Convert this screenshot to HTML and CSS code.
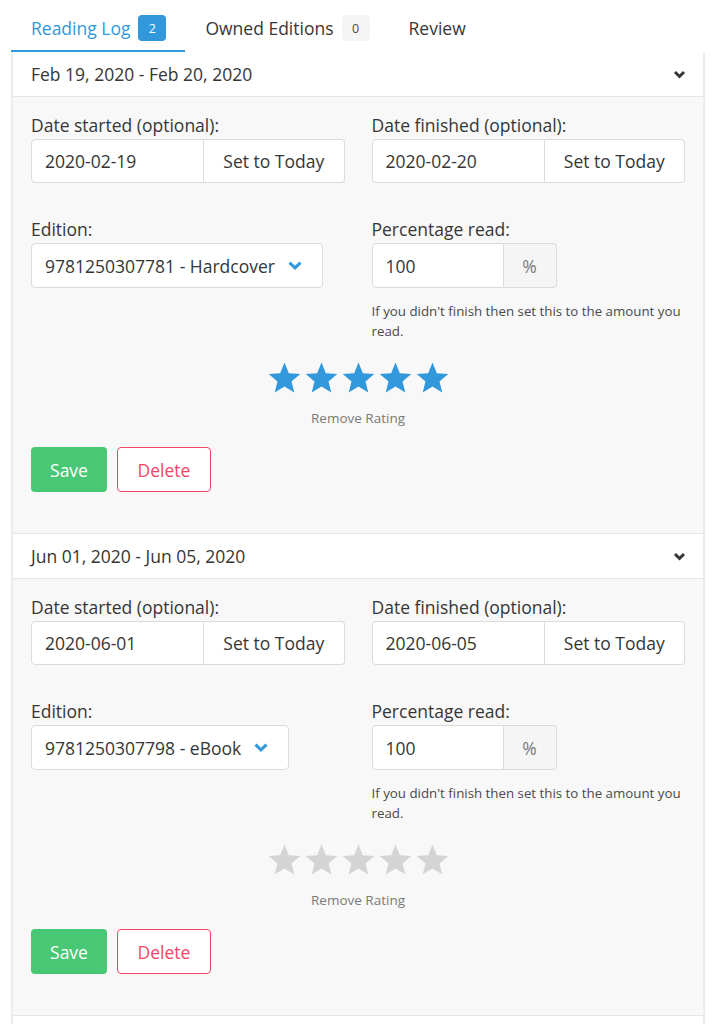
FILE: index.html
```html
<!DOCTYPE html>
<html lang="en">

<head>
    <meta charset="UTF-8">
    <meta name="viewport" content="width=device-width, initial-scale=1.0">
    <title>Reading Log</title>
    <link rel="stylesheet" href="styles.css">
</head>

<body>
    <div class="tabs">
        <ul>
            <li class="is_active"><a href="JavaScript:">Reading Log <span class="tag tag_info">2</span></a></li>
            <li><a href="JavaScript:">Owned Editions <span class="tag">0</span></a></li>
            <li><a href="JavaScript:">Review</a></li>
        </ul>
    </div>

    <div class="log">
        <div class="log_head">
            <span>Feb 19, 2020 - Feb 20, 2020</span>
            <svg class="head_arrow" width="13" height="9" viewBox="0 0 13 9"><path d="M2 2l4.5 4.5L11 2" fill="none" stroke="#363636" stroke-width="3"/></svg>
        </div>
        <div class="log_body">
            <div class="cols">
                <div class="field">
                    <label>Date started (optional):</label>
                    <div class="addons">
                        <input type="text" value="2020-02-19">
                        <button type="button">Set to Today</button>
                    </div>
                </div>
                <div class="field">
                    <label>Date finished (optional):</label>
                    <div class="addons">
                        <input type="text" value="2020-02-20">
                        <button type="button">Set to Today</button>
                    </div>
                </div>
                <div class="field">
                    <label>Edition:</label>
                    <div class="select">
                        <span>9781250307781 - Hardcover</span>
                        <svg width="14" height="9" viewBox="0 0 14 9"><path d="M1.5 1.6l5.5 5.3 5.5-5.3" fill="none" stroke="#3298dc" stroke-width="3"/></svg>
                    </div>
                </div>
                <div class="field">
                    <label>Percentage read:</label>
                    <div class="addons addons_pct">
                        <input type="text" value="100">
                        <span class="unit">%</span>
                    </div>
                    <p class="help">If you didn't finish then set this to the amount you read.</p>
                </div>
            </div>
            <div class="rating">
                <div class="stars">
                    <svg viewBox="0 0 32 32"><path d="M16 1.5l4.2 10.3 11.1.8-8.5 7.2 2.7 10.8L16 24.7l-9.5 5.9 2.7-10.8L.7 12.6l11.1-.8z"/></svg>
                    <svg viewBox="0 0 32 32"><path d="M16 1.5l4.2 10.3 11.1.8-8.5 7.2 2.7 10.8L16 24.7l-9.5 5.9 2.7-10.8L.7 12.6l11.1-.8z"/></svg>
                    <svg viewBox="0 0 32 32"><path d="M16 1.5l4.2 10.3 11.1.8-8.5 7.2 2.7 10.8L16 24.7l-9.5 5.9 2.7-10.8L.7 12.6l11.1-.8z"/></svg>
                    <svg viewBox="0 0 32 32"><path d="M16 1.5l4.2 10.3 11.1.8-8.5 7.2 2.7 10.8L16 24.7l-9.5 5.9 2.7-10.8L.7 12.6l11.1-.8z"/></svg>
                    <svg viewBox="0 0 32 32"><path d="M16 1.5l4.2 10.3 11.1.8-8.5 7.2 2.7 10.8L16 24.7l-9.5 5.9 2.7-10.8L.7 12.6l11.1-.8z"/></svg>
                </div>
                <a href="JavaScript:" class="remove">Remove Rating</a>
            </div>
            <div class="actions">
                <button type="button" class="btn_save">Save</button>
                <button type="button" class="btn_delete">Delete</button>
            </div>
        </div>

        <div class="log_head">
            <span>Jun 01, 2020 - Jun 05, 2020</span>
            <svg class="head_arrow" width="13" height="9" viewBox="0 0 13 9"><path d="M2 2l4.5 4.5L11 2" fill="none" stroke="#363636" stroke-width="3"/></svg>
        </div>
        <div class="log_body">
            <div class="cols">
                <div class="field">
                    <label>Date started (optional):</label>
                    <div class="addons">
                        <input type="text" value="2020-06-01">
                        <button type="button">Set to Today</button>
                    </div>
                </div>
                <div class="field">
                    <label>Date finished (optional):</label>
                    <div class="addons">
                        <input type="text" value="2020-06-05">
                        <button type="button">Set to Today</button>
                    </div>
                </div>
                <div class="field">
                    <label>Edition:</label>
                    <div class="select">
                        <span>9781250307798 - eBook</span>
                        <svg width="14" height="9" viewBox="0 0 14 9"><path d="M1.5 1.6l5.5 5.3 5.5-5.3" fill="none" stroke="#3298dc" stroke-width="3"/></svg>
                    </div>
                </div>
                <div class="field">
                    <label>Percentage read:</label>
                    <div class="addons addons_pct">
                        <input type="text" value="100">
                        <span class="unit">%</span>
                    </div>
                    <p class="help">If you didn't finish then set this to the amount you read.</p>
                </div>
            </div>
            <div class="rating">
                <div class="stars stars_empty">
                    <svg viewBox="0 0 32 32"><path d="M16 1.5l4.2 10.3 11.1.8-8.5 7.2 2.7 10.8L16 24.7l-9.5 5.9 2.7-10.8L.7 12.6l11.1-.8z"/></svg>
                    <svg viewBox="0 0 32 32"><path d="M16 1.5l4.2 10.3 11.1.8-8.5 7.2 2.7 10.8L16 24.7l-9.5 5.9 2.7-10.8L.7 12.6l11.1-.8z"/></svg>
                    <svg viewBox="0 0 32 32"><path d="M16 1.5l4.2 10.3 11.1.8-8.5 7.2 2.7 10.8L16 24.7l-9.5 5.9 2.7-10.8L.7 12.6l11.1-.8z"/></svg>
                    <svg viewBox="0 0 32 32"><path d="M16 1.5l4.2 10.3 11.1.8-8.5 7.2 2.7 10.8L16 24.7l-9.5 5.9 2.7-10.8L.7 12.6l11.1-.8z"/></svg>
                    <svg viewBox="0 0 32 32"><path d="M16 1.5l4.2 10.3 11.1.8-8.5 7.2 2.7 10.8L16 24.7l-9.5 5.9 2.7-10.8L.7 12.6l11.1-.8z"/></svg>
                </div>
                <a href="JavaScript:" class="remove">Remove Rating</a>
            </div>
            <div class="actions">
                <button type="button" class="btn_save">Save</button>
                <button type="button" class="btn_delete">Delete</button>
            </div>
        </div>

        <div class="log_head"></div>
    </div>
</body>

</html>
```

FILE: styles.css
```css
* {
    margin: 0;
    padding: 0;
    box-sizing: border-box;
}

body {
    font-family: "Open Sans", "Noto Sans", sans-serif;
    font-size: 17.5px;
    color: #363636;
    background-color: #fff;
}

a {
    text-decoration: none;
    color: #363636;
}

ul {
    list-style: none;
}

input,
button {
    font-family: inherit;
    color: #363636;
}

/* tabs */
.tabs {
    padding-left: 11px;
}

.tabs ul {
    display: flex;
}

.tabs li a {
    display: flex;
    align-items: center;
    gap: 8px;
    height: 52px;
    padding: 6px 19px 0 20px;
    font-size: 17.5px;
    border-bottom: 2px solid transparent;
}

.tabs li.is_active a {
    color: #3298dc;
    border-bottom-color: #3298dc;
}

.tag {
    display: inline-flex;
    align-items: center;
    justify-content: center;
    width: 28px;
    height: 26px;
    border-radius: 4px;
    font-size: 12.5px;
    color: #4a4a4a;
    background-color: #f5f5f5;
}

.tag_info {
    color: #fff;
    background-color: #3298dc;
}

/* log entries */
.log {
    margin-left: 11px;
    width: 694px;
    border-left: 2px solid #ececec;
    border-right: 2px solid #ececec;
}

.log_head {
    display: flex;
    align-items: center;
    justify-content: space-between;
    height: 45px;
    padding: 0 17px 0 18px;
    font-size: 17.5px;
    background-color: #fff;
    border-bottom: 1px solid #e6e6e6;
}

.log_body {
    padding: 16px 18px 41px;
    background-color: #f8f8f8;
    border-bottom: 1px solid #e6e6e6;
}

.cols {
    display: grid;
    grid-template-columns: 1fr 1fr;
    column-gap: 27px;
    row-gap: 34px;
}

.field label {
    display: block;
    height: 24px;
    line-height: 24px;
    margin-bottom: 2px;
    font-size: 17.5px;
}

.addons {
    display: flex;
    height: 44px;
}

.addons input {
    width: 173px;
    padding: 0 13px;
    font-size: 17.5px;
    border: 1px solid #dbdbdb;
    border-radius: 4px 0 0 4px;
    background-color: #fff;
    outline: none;
}

.addons button {
    flex: 1;
    font-size: 17.5px;
    border: 1px solid #dbdbdb;
    border-left: none;
    border-radius: 0 4px 4px 0;
    background-color: #fff;
}

.addons_pct {
    height: 45px;
}

.addons_pct input {
    width: 132px;
}

.addons .unit {
    display: flex;
    align-items: center;
    justify-content: center;
    width: 53px;
    color: #7a7a7a;
    font-size: 17.5px;
    border: 1px solid #dbdbdb;
    border-left: none;
    border-radius: 0 4px 4px 0;
    background-color: #f5f5f5;
}

.select {
    display: inline-flex;
    align-items: center;
    gap: 13px;
    height: 45px;
    padding: 0 20px 0 13px;
    font-size: 17.5px;
    border: 1px solid #dbdbdb;
    border-radius: 4px;
    background-color: #fff;
}

.help {
    margin-top: 13px;
    font-size: 13.3px;
    line-height: 20px;
    color: #4a4a4a;
}

/* rating */
.rating {
    display: flex;
    flex-direction: column;
    align-items: center;
    margin-top: 20px;
}

.stars {
    display: flex;
    gap: 4px;
}

.stars svg {
    width: 33px;
    height: 33px;
    fill: #3298dc;
}

.stars_empty svg {
    fill: #d4d4d4;
}

.remove {
    margin-top: 15px;
    font-size: 13.5px;
    line-height: 18px;
    color: #7a7a7a;
}

.actions {
    display: flex;
    gap: 10px;
    margin-top: 20px;
}

.actions button {
    height: 45px;
    font-size: 17.5px;
    border-radius: 4px;
}

.btn_save {
    width: 76px;
    color: #fff;
    border: 1px solid transparent;
    background-color: #48c774;
}

.btn_delete {
    width: 94px;
    color: #f14668;
    border: 1px solid #f14668;
    background-color: #fff;
}
```
